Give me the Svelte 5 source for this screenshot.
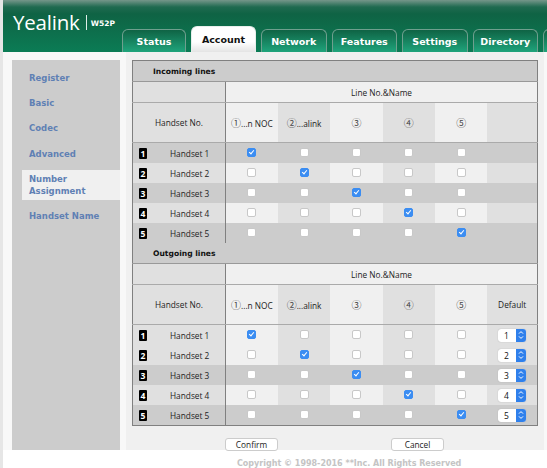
<script>
  const tabs = ['Status', 'Account', 'Network', 'Features', 'Settings', 'Directory', ''];
  const side = ['Register', 'Basic', 'Codec', 'Advanced', 'Number Assignment', 'Handset Name'];
  const heads = [
    { c: '①', t: '...n NOC' },
    { c: '②', t: '...alink' },
    { c: '③', t: '' },
    { c: '④', t: '' },
    { c: '⑤', t: '' }
  ];
  const rows = [1, 2, 3, 4, 5];
  const sections = [
    { title: 'Incoming lines', select: false },
    { title: 'Outgoing lines', select: true }
  ];
</script>

<div class="page">
  <header class="top">
    <div class="logo">
      <span class="brand">Yealink</span><span class="bar"></span><span class="model">W52P</span>
    </div>
    <nav class="tabs">
      {#each tabs as t}
        <div class="tab" class:active={t === 'Account'} class:status={t === 'Status'}>{t}</div>
      {/each}
    </nav>
  </header>

  <div class="body">
    <aside class="side">
      {#each side as s}
        <div class="item" class:current={s === 'Number Assignment'}>{s}</div>
      {/each}
    </aside>

    <main class="content">
      <table>
        <colgroup>
          <col class="c0" /><col class="c" /><col class="c" /><col class="c" /><col class="c" /><col class="c" /><col class="cl" />
        </colgroup>
        <tbody>
          {#each sections as sec}
            <tr class="title"><td colspan="7"><b>{sec.title}</b></td></tr>
            <tr class="linename">
              <td class="first empty"></td>
              <td colspan="6">Line No.&amp;Name</td>
            </tr>
            <tr class="heads">
              <td class="first">Handset No.</td>
              {#each heads as h}<td><span class="circ">{h.c}</span>{h.t}</td>{/each}
              <td>{sec.select ? 'Default' : ''}</td>
            </tr>
            {#each rows as r}
              <tr class="row">
                <td class="first">
                  <div class="hs"><span class="num">{r}</span><span class="name">Handset {r}</span></div>
                </td>
                {#each heads as _, i}
                  <td><input type="checkbox" checked={i + 1 === r} /></td>
                {/each}
                <td>
                  {#if sec.select}
                    <div class="sel">
                      <span class="val">{r}</span>
                      <span class="arrows">
                        <svg viewBox="0 0 8 12" width="8" height="12"><path d="M2 4.6 4 2.6 6 4.6M2 7.4 4 9.4 6 7.4" fill="none" stroke="#fff" stroke-width="1"/></svg>
                      </span>
                    </div>
                  {/if}
                </td>
              </tr>
            {/each}
          {/each}
        </tbody>
      </table>
      <div class="actions">
        <button>Confirm</button>
        <button>Cancel</button>
      </div>
    </main>
  </div>

  <footer class="foot">Copyright © 1998-2016 **Inc. All Rights Reserved</footer>
</div>

<style>
  :global(body) { margin: 0; background: #fff; }
  .page {
    width: 547px; height: 468px; overflow: hidden;
    box-sizing: border-box; border-left: 3px solid #e6e6e6;
    font-family: "Open Sans", sans-serif; font-size: 8.3px; color: #222;
  }
  .top {
    height: 52px; display: flex; align-items: flex-end; overflow: hidden;
    background: linear-gradient(#75968a 0, #1f6a50 7px, #0f6344 14px, #0b7c55 52px);
  }
  .logo {
    width: 119px; flex: none; align-self: flex-start; padding: 8px 0 0 10px; box-sizing: border-box;
    display: flex; align-items: center; color: #fff; height: 36px;
  }
  .brand { font-family: "Open Sans", sans-serif; font-size: 20.5px; letter-spacing: -.2px; }
  .bar { width: 1px; height: 15px; background: #dfeee8; margin: 0 4px 0 6px; }
  .model { font-family: "DejaVu Sans", sans-serif; font-weight: 700; font-size: 7.5px; padding-top: 3px; }
  .tabs { display: flex; align-items: flex-end; gap: 5px; }
  .tab {
    width: 65.5px; height: 23px; flex: none; box-sizing: border-box;
    display: flex; align-items: center; justify-content: center;
    border: 1px solid #6f9f8e; border-bottom: 0; border-radius: 6px 6px 0 0;
    background: linear-gradient(#0f6344, #1fa47b);
    color: #fff; font-family: "DejaVu Sans", sans-serif; font-weight: 700; font-size: 9.5px; padding-top: 1px;
  }
  .tab.status { width: 64px; }
  .tab.active {
    height: 26px; width: 65px; color: #111; border-color: #e8efec;
    background: linear-gradient(#fff 60%, #e4e4e4); padding-top: 0;
  }
  .body { display: flex; height: 398px; background: #f8f8f8; padding-left: 9px; }
  .side {
    width: 108px; margin-top: 8px; background: #ccc; flex: none; padding-top: 5px; box-sizing: border-box;
    color: #5f80b4; font-family: "DejaVu Sans", sans-serif; font-weight: 700; font-size: 8.5px;
  }
  .item { height: 25.4px; display: flex; align-items: center; padding-left: 17px; line-height: 12px; }
  .item.current {
    height: 30px; padding-left: 7px; margin-left: 10px; background: #f0f0f0; width: 98px;
    box-sizing: border-box; padding-right: 30px; margin-top: 3px; margin-bottom: 4px;
  }
  .content {
    flex: none; width: 418px; margin-left: 6px; background: #f0f0f0; padding: 8px 0 0 6px; box-sizing: border-box;
  }
  table {
    width: 406px; table-layout: fixed; border-collapse: collapse; border: 1px solid #808080;
    text-align: center;
  }
  col.c0 { width: 93px; }
  col.c { width: 52.4px; }
  col.cl { width: 50px; }
  td { padding: 0; border: 0; vertical-align: middle; }
  .title td {
    height: 20px; background: #ccc; text-align: left; padding-left: 20px; color: #111;
    border-bottom: 1px solid #999; font-family: "DejaVu Sans", sans-serif; font-size: 7.6px;
  }
  .linename td { height: 20px; background: #f0f0f0; border-bottom: 1px solid #aaa; }
  .linename td.empty { background: #e0e0e0; }
  .heads td { height: 39px; background: #e0e0e0; border-bottom: 1px solid #aaa; }
  .heads td:nth-child(even) { background: #f0f0f0; }
  .heads td.first { background: #e0e0e0; }
  .circ { font-family: "Noto Sans CJK SC", sans-serif; font-size: 10px; color: #444; }
  .row td { height: 20px; background: #e0e0e0; }
  .row td:nth-child(even) { background: #f0f0f0; }
  .row td.first { background: #e0e0e0; }
  tr.row:nth-of-type(10n+4) td, tr.row:nth-of-type(10n+6) td, tr.row:nth-of-type(10n+8) td { background: #ccc; }
  td.first { border-right: 1px solid #808080; }
  .hs { display: flex; align-items: center; padding-left: 6px; }
  .num {
    width: 8px; height: 11px; background: #000; color: #fff; font-weight: 700; font-size: 8.5px;
    line-height: 11px; border-radius: 1px; text-align: center; flex: none;
  }
  .name { margin-left: 23px; }
  input {
    appearance: none; margin: -1px auto 0; width: 9px; height: 9px; box-sizing: border-box; display: block;
    position: relative;
    background: #fff; border: 1px solid #c8c8c8; border-radius: 2px;
  }
  input:checked { background: #3b8df2; border-color: #3b8df2; }
  input:checked::after {
    content: ""; position: absolute; left: 2px; top: 0; width: 2px; height: 4px;
    border: solid #fff; border-width: 0 1.2px 1.2px 0; transform: rotate(40deg);
  }
  .sel {
    width: 28px; height: 13px; margin-left: 11px; display: flex; border-radius: 3px; overflow: hidden;
    box-shadow: 0 0 1px #999; background: #fff; color: #111;
  }
  .val { flex: 1; text-align: center; line-height: 13px; font-size: 8.5px; padding-right: 2px; }
  .arrows { width: 10px; background: #2f80ec; display: flex; align-items: center; justify-content: center; }
  .actions { display: flex; padding: 12px 0 0 93px; gap: 113px; }
  button {
    width: 53px; height: 13px; padding: 0; box-sizing: border-box; background: #fff;
    border: 1px solid #ccc; border-radius: 3px; font: inherit; color: #222;
  }
  .foot {
    padding: 9px 0 0 234px; color: #c4c4c4; font-family: "DejaVu Sans", sans-serif; font-weight: 700; font-size: 8px; white-space: nowrap;
  }
</style>
